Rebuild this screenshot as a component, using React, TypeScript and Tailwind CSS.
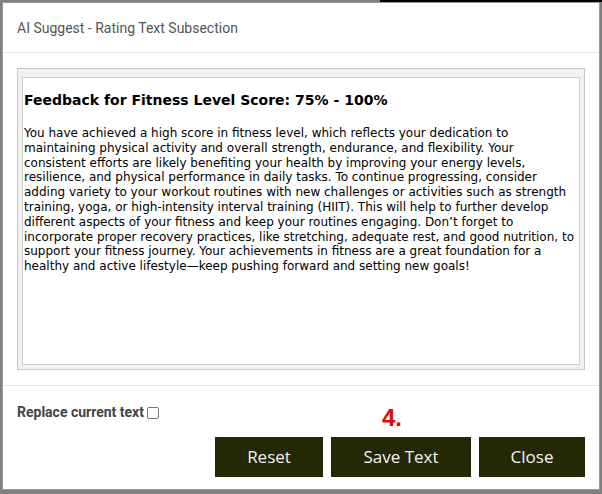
import React from "react";

const lines = [
  "You have achieved a high score in fitness level, which reflects your dedication to",
  "maintaining physical activity and overall strength, endurance, and flexibility. Your",
  "consistent efforts are likely benefiting your health by improving your energy levels,",
  "resilience, and physical performance in daily tasks. To continue progressing, consider",
  "adding variety to your workout routines with new challenges or activities such as strength",
  "training, yoga, or high-intensity interval training (HIIT). This will help to further develop",
  "different aspects of your fitness and keep your routines engaging. Don\u2019t forget to",
  "incorporate proper recovery practices, like stretching, adequate rest, and good nutrition, to",
  "support your fitness journey. Your achievements in fitness are a great foundation for a",
  "healthy and active lifestyle\u2014keep pushing forward and setting new goals!",
];

export default function App() {
  return (
    <div className="relative w-[602px] h-[494px] overflow-hidden bg-[#808080] pt-[2px] pl-[2px]">
      <div className="h-[2px] absolute top-0 left-[380px] right-0 bg-black" />
      <div className="relative w-[598px] h-[488px] bg-white border border-[#9a9a9a] flex flex-col">
        {/* header */}
        <div className="h-[50px] shrink-0 flex items-center px-[14px] border-b border-[#e3e3e3]">
          <span className="text-[14px] text-[#555] font-['Roboto',sans-serif] pt-[1px]">
            AI Suggest - Rating Text Subsection
          </span>
        </div>
        {/* body */}
        <div className="px-[14px] pt-[15px] pb-[15px] border-b border-[#e3e3e3]">
          <div className="h-[302px] bg-[#f1f1f1] border border-[#c6c6c6] pt-[8px] px-[4px] pb-[4px]">
            <div className="h-full bg-white border border-[#cfcfcf] pl-[1px] pt-[14px] font-['DejaVu_Sans',sans-serif] text-black">
              <div className="text-[14px] font-bold leading-[17px]">
                Feedback for Fitness Level Score: 75% - 100%
              </div>
              <div className="mt-[17px] text-[12px] leading-[14.8px]">
                {lines.map((l, i) => (
                  <div key={i} className="whitespace-nowrap">
                    {l}
                  </div>
                ))}
              </div>
            </div>
          </div>
        </div>
        {/* footer */}
        <div className="relative flex-1 px-[14px] pt-[17px] font-['Roboto',sans-serif]">
          <label className="flex items-center gap-[3px] text-[14px] font-bold text-[#444] leading-[18px]">
            Replace current text
            <span className="w-[12px] h-[12px] border border-[#767676] rounded-[2px] bg-white inline-block mt-[1px]" />
          </label>
          <div className="absolute left-[379px] top-[17px] text-[24px] font-bold text-[#ee0000] font-['Liberation_Sans',sans-serif] leading-[30px]">
            4.
          </div>
          <div className="flex justify-end gap-[8px] mt-[16px] font-['Open_Sans',sans-serif]">
            <button className="w-[108px] h-[40px] bg-[#252805] text-[#f2f2f2] text-[17px]">
              Reset
            </button>
            <button className="w-[140px] h-[40px] bg-[#252805] text-[#f2f2f2] text-[17px]">
              Save Text
            </button>
            <button className="w-[106px] h-[40px] bg-[#252805] text-[#f2f2f2] text-[17px]">
              Close
            </button>
          </div>
        </div>
      </div>
    </div>
  );
}
